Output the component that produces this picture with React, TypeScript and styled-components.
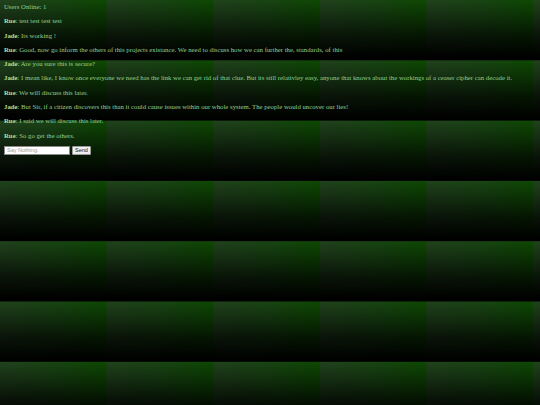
import React from "react";
import styled, { createGlobalStyle } from "styled-components";

const GlobalStyle = createGlobalStyle`
  html, body {
    margin: 0;
    padding: 0;
    min-height: 100%;
  }
  html {
    height: 100%;
    background-color: #000;
    background-image:
      linear-gradient(to bottom, rgba(0, 0, 0, 0) 0%, rgba(0, 0, 0, 0.7) 60%, #000 96%),
      linear-gradient(to right, #21421d 0%, #184512 55%, #0d4902 100%);
    background-size: 106.6px 60.3px;
    background-repeat: repeat;
  }
  body {
    font-family: "Liberation Serif", "Times New Roman", serif;
  }
`;

const Chat = styled.div`
  padding: 0 4px;
  color: #92d092;
  font-size: 6.75px;
`;

const Line = styled.div`
  height: 14.3px;
  line-height: 14.3px;
  white-space: nowrap;
`;

const Name = styled.b`
  color: #a6e0a6;
`;

const Form = styled.form`
  display: flex;
  align-items: center;
  gap: 2px;
  margin-top: 3px;
`;

const Input = styled.input`
  box-sizing: border-box;
  width: 66px;
  height: 9px;
  padding: 0 2px;
  border: 1px solid #8a8a8a;
  background: #fff;
  font-family: "Liberation Sans", Arial, sans-serif;
  font-size: 5.5px;
  outline: none;
  &::placeholder {
    color: #999;
  }
`;

const SendButton = styled.button`
  box-sizing: border-box;
  width: 19px;
  height: 9px;
  padding: 0;
  border: 1px solid #9a9a9a;
  border-radius: 1px;
  background: #efefef;
  color: #111;
  font-family: "Liberation Sans", Arial, sans-serif;
  font-size: 5.5px;
  line-height: 7px;
`;

const messages = [
  { from: "Rue", text: "test test test test" },
  { from: "Jade", text: "Its working !" },
  {
    from: "Rue",
    text: "Good, now go inform the others of this projects existance. We need to discuss how we can further the, standards, of this",
  },
  { from: "Jade", text: "Are you sure this is secure?" },
  {
    from: "Jade",
    text: "I mean like, I know once everyone we need has the link we can get rid of that clue. But its still relativley easy, anyone that knows about the workings of a ceaser cipher can decode it.",
  },
  { from: "Rue", text: "We will discuss this later." },
  {
    from: "Jade",
    text: "But Sir, if a citizen discovers this than it could cause issues within our whole system. The people would uncover our lies!",
  },
  { from: "Rue", text: "I said we will discuss this later." },
  { from: "Rue", text: "So go get the others." },
];

export default function App() {
  const [draft, setDraft] = React.useState("");

  return (
    <>
      <GlobalStyle />
      <Chat>
        <Line>Users Online: 1</Line>
        {messages.map((m, i) => (
          <Line key={i}>
            <Name>{m.from}</Name>: {m.text}
          </Line>
        ))}
        <Form onSubmit={(e) => e.preventDefault()}>
          <Input
            placeholder="Say Nothing."
            value={draft}
            onChange={(e) => setDraft(e.target.value)}
          />
          <SendButton type="submit">Send</SendButton>
        </Form>
      </Chat>
    </>
  );
}
